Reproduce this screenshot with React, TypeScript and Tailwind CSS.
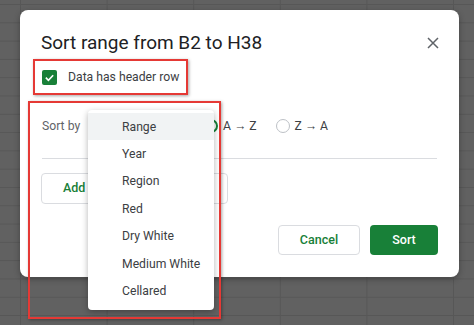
import React from "react";

const items = ["Range", "Year", "Region", "Red", "Dry White", "Medium White", "Cellared"];

export default function App() {
  return (
    <div
      className="relative w-[474px] h-[325px] overflow-hidden bg-[#616161] bg-[linear-gradient(to_right,#575757_1px,transparent_1px),linear-gradient(to_bottom,#575757_1px,transparent_1px)] bg-[size:86.6px_18.3px] bg-[position:20px_4px] pt-[10px] pl-[20px]"
      style={{ fontFamily: "Roboto, 'Noto Sans', Arial, sans-serif" }}
    >
      {/* Dialog */}
      <div className="w-[439px] h-[267px] bg-white rounded-[8px] shadow-[0_2px_6px_rgba(0,0,0,0.3)] flex flex-col pl-[21px] pr-[21px]">
        <div className="flex items-center justify-between h-[28px] mt-[19px]">
          <div className="text-[19px] text-[#202124] leading-[28px]">Sort range from B2 to H38</div>
          <svg width="12" height="12" viewBox="0 0 12 12" className="mr-[-1px]">
            <path d="M1 1L11 11M11 1L1 11" stroke="#5f6368" strokeWidth="1.5" />
          </svg>
        </div>
        <div className="flex items-center h-[15px] mt-[13px] pl-[1px]">
          <div className="w-[15px] h-[15px] rounded-[2px] bg-[#188038] flex items-center justify-center">
            <svg width="11" height="11" viewBox="0 0 12 12">
              <path d="M2 6.2L4.8 9L10 3.5" stroke="white" strokeWidth="1.8" fill="none" />
            </svg>
          </div>
          <div className="ml-[11px] text-[12.2px] text-[#3c4043]">Data has header row</div>
        </div>
        <div className="flex items-center h-[28px] mt-[27px] pl-[1px]">
          <div className="text-[12.2px] text-[#5f6368] w-[162px]">Sort by</div>
          <div className="w-[14px] h-[14px] rounded-full border-[2px] border-[#188038] flex items-center justify-center">
            <div className="w-[6px] h-[6px] rounded-full bg-[#188038]" />
          </div>
          <div className="ml-[5px] text-[12.2px] text-[#3c4043]">A → Z</div>
          <div className="ml-[19px] w-[14px] h-[14px] rounded-full border-[1.5px] border-[#bdc1c6]" />
          <div className="ml-[5px] text-[12.2px] text-[#3c4043]">Z → A</div>
        </div>
        <div className="h-px bg-[#dadce0] mt-[18px] ml-[1px] mr-[1px]" />
        <div className="mt-[14px] w-[187px] h-[31px] border border-[#dadce0] rounded-[4px] flex items-center pl-[21px] text-[12.5px] font-medium text-[#188038]">
          Add another sort column
        </div>
        <div className="flex justify-end gap-[10px] mt-[21px]">
          <div className="w-[82px] h-[30px] border border-[#dadce0] rounded-[4px] flex items-center justify-center text-[12.5px] font-medium text-[#188038]">
            Cancel
          </div>
          <div className="w-[68px] h-[30px] bg-[#188038] rounded-[4px] flex items-center justify-center text-[12.5px] font-medium text-white">
            Sort
          </div>
        </div>
      </div>

      {/* Dropdown menu */}
      <div className="absolute left-[88px] top-[110px] w-[126px] h-[200px] bg-white rounded-[4px] shadow-[0_2px_6px_rgba(0,0,0,0.3)] py-[3px]">
        {items.map((t, i) => (
          <div
            key={t}
            className={`h-[27.4px] flex items-center pl-[34px] text-[12.2px] text-[#3c4043] ${i === 0 ? "bg-[#f1f3f4]" : ""}`}
          >
            {t}
          </div>
        ))}
      </div>

      {/* Red highlight boxes */}
      <div className="absolute left-[33px] top-[59px] w-[155px] h-[36px] border-[2.5px] border-[#e53935] shadow-[1px_1px_3px_rgba(0,0,0,0.35)]" />
      <div className="absolute left-[28px] top-[101px] w-[193px] h-[218px] border-[2.5px] border-[#e53935] shadow-[1px_1px_3px_rgba(0,0,0,0.35)]" />
    </div>
  );
}
